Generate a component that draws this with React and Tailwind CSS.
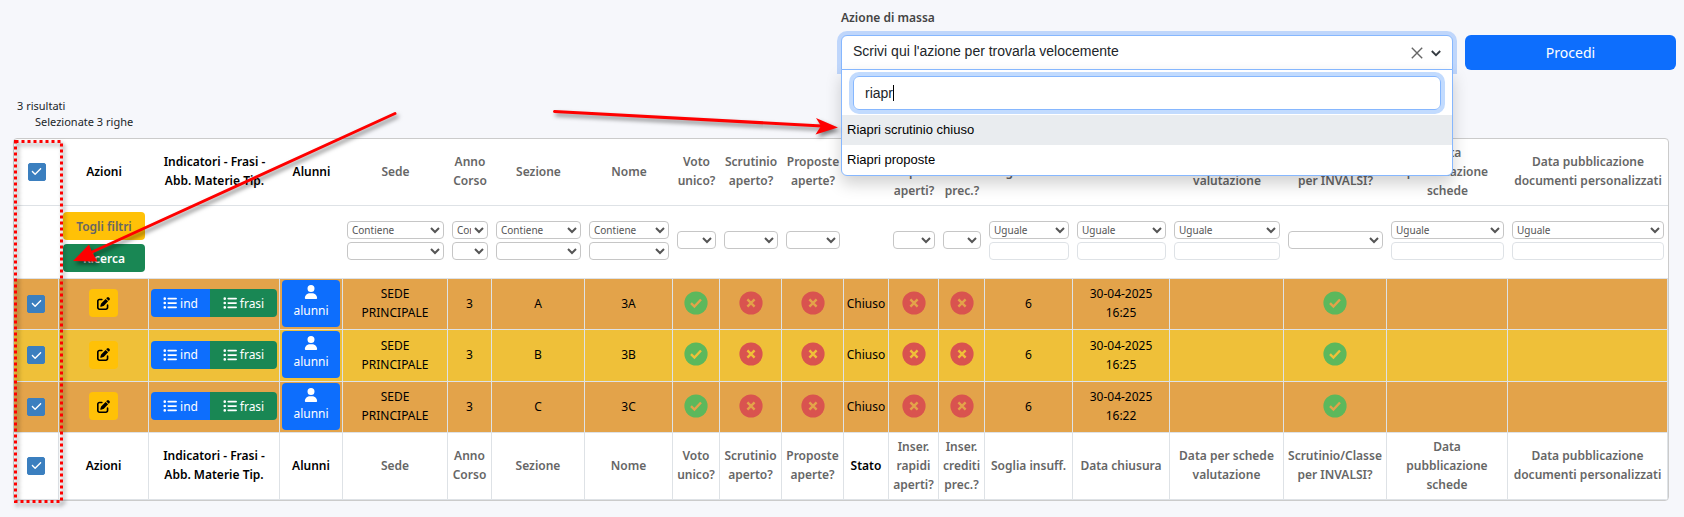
import { useState } from "react";
import { FaCheck, FaListUl, FaPenToSquare, FaUser } from "react-icons/fa6";

const columns = [
  { key: "check", width: 45 },
  { key: "azioni", width: 90, lines: ["Azioni"], strong: true },
  {
    key: "indicatori",
    width: 131,
    lines: ["Indicatori - Frasi -", "Abb. Materie Tip."],
    strong: true,
  },
  { key: "alunni", width: 63, lines: ["Alunni"], strong: true },
  { key: "sede", width: 105, lines: ["Sede"], filter: "contiene" },
  { key: "anno", width: 44, lines: ["Anno", "Corso"], filter: "contiene" },
  { key: "sezione", width: 93, lines: ["Sezione"], filter: "contiene" },
  { key: "nome", width: 88, lines: ["Nome"], filter: "contiene" },
  { key: "voto", width: 47, lines: ["Voto", "unico?"], filter: "bool" },
  { key: "scrutinio", width: 62, lines: ["Scrutinio", "aperto?"], filter: "bool" },
  { key: "proposte", width: 62, lines: ["Proposte", "aperte?"], filter: "bool" },
  { key: "stato", width: 45, lines: ["Stato"], strong: true },
  { key: "rapidi", width: 50, lines: ["Inser.", "rapidi", "aperti?"], filter: "bool" },
  { key: "crediti", width: 46, lines: ["Inser.", "crediti", "prec.?"], filter: "bool" },
  { key: "soglia", width: 88, lines: ["Soglia insuff."], filter: "uguale" },
  { key: "chiusura", width: 97, lines: ["Data chiusura"], filter: "uguale" },
  {
    key: "schede",
    width: 114,
    lines: ["Data per schede", "valutazione"],
    filter: "uguale",
  },
  {
    key: "invalsi",
    width: 103,
    lines: ["Scrutinio/Classe", "per INVALSI?"],
    filter: "bool",
  },
  {
    key: "pubSchede",
    width: 121,
    lines: ["Data", "pubblicazione", "schede"],
    filter: "uguale",
  },
  {
    key: "pubDocumenti",
    width: 160,
    lines: ["Data pubblicazione", "documenti personalizzati"],
    filter: "uguale",
  },
];

const classi = [
  { sezione: "A", nome: "3A", ora: "16:25", color: "#e3a34a", row: "h-[51px] bg-[#e3a34a]" },
  { sezione: "B", nome: "3B", ora: "16:25", color: "#efc039", row: "h-[52px] bg-[#efc039]" },
  { sezione: "C", nome: "3C", ora: "16:22", color: "#e3a34a", row: "h-[51px] bg-[#e3a34a]" },
];

function Checkbox({ label, checked, onChange }) {
  return (
    <span className="inline-grid size-[18px] align-middle">
      <input
        type="checkbox"
        aria-label={label}
        checked={checked}
        onChange={onChange}
        className="size-[18px] appearance-none rounded-xs border border-[#3b7fbf] bg-white [grid-area:1/1] checked:bg-[#3b7fbf]"
      />
      {checked && (
        <FaCheck className="pointer-events-none size-[11px] place-self-center text-white [grid-area:1/1]" />
      )}
    </span>
  );
}

function Esito({ ok, color }) {
  return (
    <svg
      viewBox="0 0 24 24"
      role="img"
      aria-label={ok ? "Sì" : "No"}
      className="mx-auto mb-px block size-6"
    >
      <circle cx="12" cy="12" r="11.6" fill={ok ? "#5cb85c" : "#d9534f"} />
      <path
        d={ok ? "M7 12.2l3.4 3.3 6.6-7" : "M8.4 8.4l7.2 7.2M15.6 8.4l-7.2 7.2"}
        fill="none"
        stroke={color}
        strokeWidth="2.4"
      />
    </svg>
  );
}

function FilterSelect({ label, options }) {
  return (
    <select
      aria-label={label}
      className="block h-[18px] w-full rounded border border-[#c6c6c6] bg-white text-[10px] text-[#555]"
    >
      {options.map((option) => (
        <option key={option}>{option}</option>
      ))}
    </select>
  );
}

function Filter({ column }) {
  const name = column.lines.join(" ");

  if (column.filter === "bool") {
    return <FilterSelect label={name} options={["", "Sì", "No"]} />;
  }
  if (column.filter === "contiene") {
    return (
      <div className="flex flex-col gap-[3px]">
        <FilterSelect label={`${name} operatore`} options={["Contiene", "Uguale"]} />
        <FilterSelect label={name} options={[""]} />
      </div>
    );
  }
  return (
    <div className="flex flex-col gap-[3px]">
      <FilterSelect label={`${name} operatore`} options={["Uguale", "Contiene"]} />
      <input
        type="text"
        aria-label={name}
        className="block h-[18px] w-full rounded border border-[#dee2e6] bg-white px-1 text-[10px]"
      />
    </div>
  );
}

function Heading({ column }) {
  return (
    <span className={column.strong ? "text-black" : "text-[#666]"}>
      {column.lines.map((line) => (
        <span key={line} className="block whitespace-nowrap">
          {line}
        </span>
      ))}
    </span>
  );
}

function Cell({ children }) {
  return <td className="border-r border-b border-[#dee2e6] p-0 pb-0.5">{children}</td>;
}

function MassAction() {
  const [query, setQuery] = useState("riapr");

  return (
    <div className="relative">
      <label
        htmlFor="azione"
        className="block pt-2 pb-2 leading-[19px] font-semibold text-[#444]"
      >
        Azione di massa
      </label>
      <button
        id="azione"
        type="button"
        aria-expanded="true"
        className="flex h-[35px] w-full items-center rounded-t-md border border-[#86b7fe] bg-white px-[11px] text-left font-['Liberation_Sans',sans-serif] text-[14px] text-[#212529] ring-4 ring-[#bfd6fb]"
      >
        <span className="flex-1 pb-0.5">Scrivi qui l'azione per trovarla velocemente</span>
        <svg viewBox="0 0 12 12" className="size-3" stroke="#666" strokeWidth="1.4">
          <path d="M.8.8l10.4 10.4M11.2.8L.8 11.2" />
        </svg>
        <svg
          viewBox="0 0 10 10"
          className="ml-2 size-2.5"
          fill="none"
          stroke="#343a40"
          strokeWidth="1.8"
        >
          <path d="M.8 3L5 7.2 9.2 3" />
        </svg>
      </button>
      <div className="absolute inset-x-0 top-full z-10 -mt-px rounded-b-md border border-[#86b7fe] bg-white font-['Liberation_Sans',sans-serif] shadow-[0_8px_16px_rgba(0,0,0,0.18)]">
        <div className="relative px-[11px] pt-1.5 pb-[5px]">
          <input
            type="text"
            aria-label="Cerca azione"
            value={query}
            onChange={(event) => setQuery(event.target.value)}
            className="block h-[34px] w-full rounded-md border border-[#86b7fe] px-[11px] text-[14px] text-[#212529] ring-4 ring-[#c2dbfe] outline-none"
          />
          <span className="absolute top-[15px] left-[51px] h-4 w-px bg-black" />
        </div>
        <ul className="text-[13px] leading-[18px] text-black">
          <li className="bg-[#e9ecef] px-[5px] py-1.5">Riapri scrutinio chiuso</li>
          <li className="px-[5px] py-1.5">Riapri proposte</li>
        </ul>
      </div>
    </div>
  );
}

function Annotations() {
  return (
    <svg
      aria-hidden="true"
      className="pointer-events-none absolute inset-0 z-20 size-full overflow-visible"
      fill="none"
      stroke="#fe0000"
      strokeWidth="3"
      style={{ filter: "drop-shadow(2px 3px 2px rgba(0,0,0,0.5))" }}
    >
      <rect x="15.5" y="141.5" width="46" height="360" strokeDasharray="3 3" />
      <path d="M395 113.5L90 253" strokeLinecap="round" />
      <path d="M73 261L89 244.5L92 252L97.5 261.5z" fill="#fe0000" stroke="none" />
      <path d="M554.5 111.5L822 126" strokeLinecap="round" />
      <path d="M838 127.5L816 118L821 126L815.5 134.5z" fill="#fe0000" stroke="none" />
    </svg>
  );
}

export default function App() {
  const [selected, setSelected] = useState(["3A", "3B", "3C"]);
  const allSelected = selected.length === classi.length;

  const toggle = (nome) =>
    setSelected((current) =>
      current.includes(nome) ? current.filter((item) => item !== nome) : [...current, nome],
    );
  const toggleAll = () => setSelected(allSelected ? [] : classi.map((classe) => classe.nome));

  return (
    <div className="relative min-h-screen bg-[#f6f7fb] font-['Noto_Sans',sans-serif] text-[12px] leading-[19px]">
      <header className="grid grid-cols-[829fr_612fr_211fr] items-end gap-3 pr-2">
        <div />
        <MassAction />
        <button type="button" className="h-[35px] rounded-md bg-[#0d6efd] text-[14px] text-white">
          Procedi
        </button>
      </header>

      <div className="pt-7 pb-2 pl-[17px] text-[11px] leading-4 text-[#212529]">
        <p>3 risultati</p>
        <p className="pl-[18px]">Selezionate {selected.length} righe</p>
      </div>

      <div className="mr-[15px] ml-[13px] overflow-hidden rounded border border-[#cbcbcb] bg-white">
        <table className="w-full table-fixed border-separate border-spacing-0 text-center">
          <colgroup>
            {columns.map((column) => (
              <col key={column.key} style={{ width: column.width }} />
            ))}
          </colgroup>
          <thead>
            <tr className="h-[67px]">
              {columns.map((column) => (
                <th key={column.key} className="border-b border-[#dee2e6] p-0 pb-0.5 font-semibold">
                  {column.lines ? (
                    <Heading column={column} />
                  ) : (
                    <Checkbox label="Seleziona tutte" checked={allSelected} onChange={toggleAll} />
                  )}
                </th>
              ))}
            </tr>
            <tr className="h-[73px]">
              {columns.map((column) => (
                <td key={column.key} className="border-b border-[#dee2e6] px-1 py-0">
                  {column.key === "azioni" && (
                    <div className="flex flex-col gap-1 font-semibold">
                      <button type="button" className="h-7 rounded bg-[#ffc107] text-[#666]">
                        Togli filtri
                      </button>
                      <button type="button" className="h-7 rounded bg-[#198754] text-white">
                        Ricerca
                      </button>
                    </div>
                  )}
                  {column.filter && (
                    <div className="pb-1">
                      <Filter column={column} />
                    </div>
                  )}
                </td>
              ))}
            </tr>
          </thead>
          <tbody>
            {classi.map(({ sezione, nome, ora, color, row }) => (
              <tr key={nome} className={row}>
                <Cell>
                  <Checkbox
                    label={`Seleziona ${nome}`}
                    checked={selected.includes(nome)}
                    onChange={() => toggle(nome)}
                  />
                </Cell>
                <Cell>
                  <button
                    type="button"
                    aria-label="Modifica"
                    className="inline-flex h-7 w-[29px] items-center justify-center rounded bg-[#ffc107] align-middle text-black"
                  >
                    <FaPenToSquare className="size-[13px]" />
                  </button>
                </Cell>
                <Cell>
                  <div className="mx-0.5 flex h-7 overflow-hidden rounded text-white">
                    <button
                      type="button"
                      className="flex w-[59px] items-center justify-center gap-[3px] bg-[#0d6efd]"
                    >
                      <FaListUl className="size-[14px]" />
                      ind
                    </button>
                    <button
                      type="button"
                      className="flex flex-1 items-center justify-center gap-[3px] bg-[#198754]"
                    >
                      <FaListUl className="size-[14px]" />
                      frasi
                    </button>
                  </div>
                </Cell>
                <Cell>
                  <div className="mx-0.5 flex">
                    <button
                      type="button"
                      className="flex h-[47px] flex-1 flex-col items-center rounded bg-[#0d6efd] pt-[5px] text-white"
                    >
                      <FaUser className="size-[14px]" />
                      <span className="pt-0.5">alunni</span>
                    </button>
                  </div>
                </Cell>
                <Cell>
                  SEDE
                  <br />
                  PRINCIPALE
                </Cell>
                <Cell>3</Cell>
                <Cell>{sezione}</Cell>
                <Cell>{nome}</Cell>
                <Cell>
                  <Esito ok color={color} />
                </Cell>
                <Cell>
                  <Esito color={color} />
                </Cell>
                <Cell>
                  <Esito color={color} />
                </Cell>
                <Cell>Chiuso</Cell>
                <Cell>
                  <Esito color={color} />
                </Cell>
                <Cell>
                  <Esito color={color} />
                </Cell>
                <Cell>6</Cell>
                <Cell>
                  30-04-2025
                  <br />
                  {ora}
                </Cell>
                <Cell />
                <Cell>
                  <Esito ok color={color} />
                </Cell>
                <Cell />
                <Cell />
              </tr>
            ))}
          </tbody>
          <tfoot>
            <tr className="h-[67px]">
              {columns.map((column) => (
                <th
                  key={column.key}
                  className="border-r border-b border-[#dee2e6] p-0 pb-0.5 font-semibold"
                >
                  {column.lines ? (
                    <Heading column={column} />
                  ) : (
                    <Checkbox label="Seleziona tutte" checked={allSelected} onChange={toggleAll} />
                  )}
                </th>
              ))}
            </tr>
          </tfoot>
        </table>
      </div>

      <Annotations />
    </div>
  );
}
